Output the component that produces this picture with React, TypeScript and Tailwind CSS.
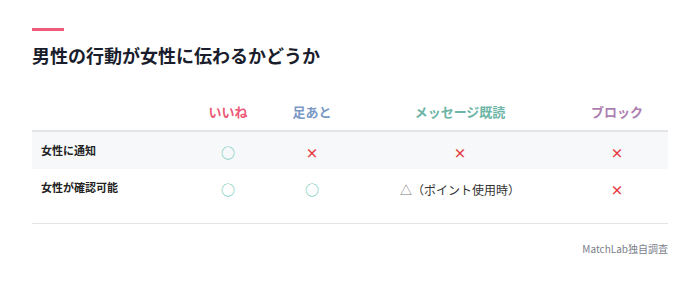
import React from "react";

type Mark = "yes" | "no" | "partial";

type Row = {
  label: string;
  cells: { mark: Mark; note?: string }[];
};

const HEADERS = [
  { label: "いいね", color: "text-[#ec5a78]" },
  { label: "足あと", color: "text-[#7a98c6]" },
  { label: "メッセージ既読", color: "text-[#6db5a6]" },
  { label: "ブロック", color: "text-[#ad7fb0]" },
];

const ROWS: Row[] = [
  {
    label: "女性に通知",
    cells: [{ mark: "yes" }, { mark: "no" }, { mark: "no" }, { mark: "no" }],
  },
  {
    label: "女性が確認可能",
    cells: [{ mark: "yes" }, { mark: "yes" }, { mark: "partial", note: "（ポイント使用時）" }, { mark: "no" }],
  },
];

function Cell({ mark, note }: { mark: Mark; note?: string }) {
  if (mark === "yes") return <span className="text-[14px] text-[#5cc3ae]">○</span>;
  if (mark === "no") return <span className="text-[13px] font-bold text-[#e5383b]">×</span>;
  return (
    <span className="text-[12px] text-[#333]">
      <span className="text-[#777]">△</span>
      {note}
    </span>
  );
}

export default function App() {
  return (
    <div
      className="h-[285px] w-[700px] bg-white px-8 pt-7"
      style={{ fontFamily: '"Noto Sans CJK JP", "Noto Sans", sans-serif' }}
    >
      {/* アクセントライン */}
      <div className="h-[3px] w-8 bg-[#ef5b7a]" />

      <h2 className="mt-[11px] text-[18px] font-bold leading-[26px] text-[#1a1d2b]">
        男性の行動が女性に伝わるかどうか
      </h2>

      <div className="mt-[26px] border-b border-[#e3e4e8] pb-[17px]">
        <div className="grid h-[38px] grid-cols-[154px_84px_84px_212px_1fr] items-center border-b-2 border-[#e3e4e8] text-[13px] font-bold">
          <div />
          {HEADERS.map((h) => (
            <div key={h.label} className={`text-center ${h.color}`}>
              {h.label}
            </div>
          ))}
        </div>

        {ROWS.map((row, i) => (
          <div
            key={row.label}
            className={[
              "grid h-[37px] grid-cols-[154px_84px_84px_212px_1fr] items-center",
              i === 0 ? "bg-[#f7f8fa]" : "",
            ].join(" ")}
          >
            <div className="pl-[9px] text-[11px] font-bold text-[#222]">{row.label}</div>
            {row.cells.map((c, j) => (
              <div key={j} className="text-center">
                <Cell mark={c.mark} note={c.note} />
              </div>
            ))}
          </div>
        ))}
      </div>

      <div className="mt-[17px] text-right text-[10px] text-[#7b808a]">MatchLab独自調査</div>
    </div>
  );
}
